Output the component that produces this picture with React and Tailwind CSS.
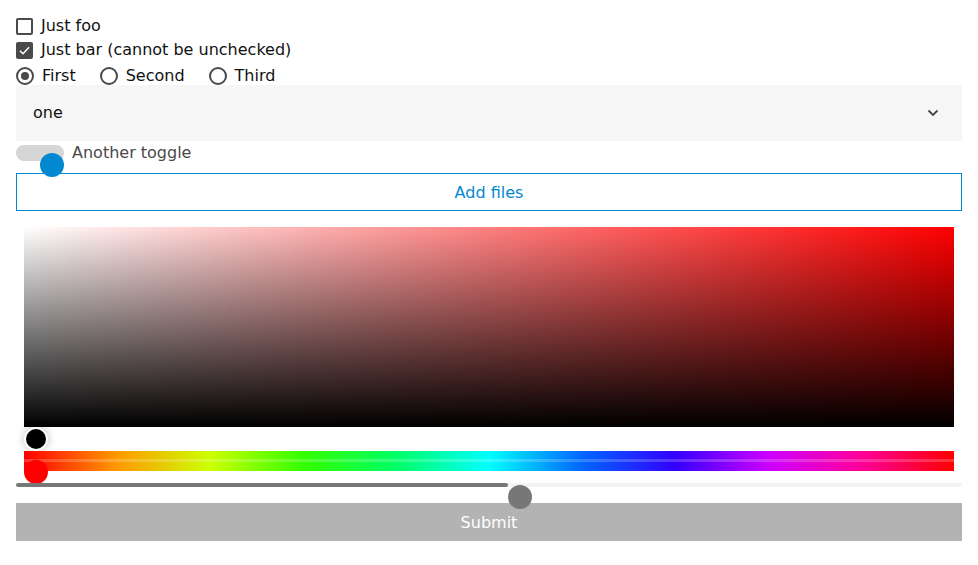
import { useState } from "react";

function Checkbox({ checked, label }) {
  return (
    <label className="flex items-center h-6 gap-2">
      <span className={"w-[17px] h-[17px] rounded-[2px] border-2 border-[#4a4a4a] flex items-center justify-center " + (checked ? "bg-[#4a4a4a]" : "bg-white")}>
        {checked && (
          <svg width="13" height="13" viewBox="0 0 12 12">
            <path d="M1.8 6.2 L4.6 9 L10.2 3" fill="none" stroke="white" strokeWidth="1.4" />
          </svg>
        )}
      </span>
      <span>{label}</span>
    </label>
  );
}

function Radio({ checked, label }) {
  return (
    <label className="flex items-center gap-2">
      <span className="w-[18px] h-[18px] rounded-full border-2 border-[#4a4a4a] flex items-center justify-center">
        {checked && <span className="w-2 h-2 rounded-full bg-[#4a4a4a]" />}
      </span>
      <span>{label}</span>
    </label>
  );
}

export default function App() {
  const [value] = useState(52)

  return (
    <div className="px-4 pt-[14px] text-[16px] text-[#111] font-['DejaVu_Sans',sans-serif]">
      <Checkbox label="Just foo" />
      <Checkbox checked label="Just bar (cannot be unchecked)" />
      <div className="flex items-center h-[23px] gap-6 pt-[4px]">
        <Radio checked label="First" />
        <Radio label="Second" />
        <Radio label="Third" />
      </div>

      <div className="h-14 bg-[#f6f6f6] flex items-center justify-between pl-[17px] pr-[23px]">
        <span>one</span>
        <svg width="12" height="8" viewBox="0 0 12 8">
          <path d="M1.5 1.5 L6 6 L10.5 1.5" fill="none" stroke="#444" strokeWidth="1.8" />
        </svg>
      </div>

      <div className="flex items-start h-8 pt-1 gap-2">
        <div className="relative w-12 h-4 rounded-full bg-[#d6d6d6]">
          <span className="absolute left-6 top-2 w-6 h-6 rounded-full bg-[#0288d1]" />
        </div>
        <span className="text-[#4a4a4a] leading-4">Another toggle</span>
      </div>

      <button className="w-full h-[38px] pt-[2px] border border-[#0288d1] text-[#0288d1]">Add files</button>

      <div className="px-2 mt-4">
        <div className="relative h-[200px] bg-[linear-gradient(to_right,#fff,#f00)]">
          <div className="absolute inset-0 bg-[linear-gradient(to_bottom,transparent,#000)]" />
          <span className="absolute left-0 top-full w-6 h-6 rounded-full bg-black border-2 border-white shadow-[0_0_8px_rgba(0,0,0,0.25)]" />
        </div>
        <div className="h-6" />
        <div className="relative h-5 bg-[linear-gradient(to_right,#f00,#f90,#cf0,#3f0,#0f6,#0ff,#06f,#30f,#c0f,#f09,#f00)]">
          <div className="absolute left-0 right-0 top-[8px] h-[3px] bg-white/20" />
          <span className="absolute left-0 top-[9px] w-6 h-6 rounded-full bg-[#f00]" />
        </div>
      </div>

      <div className="relative mt-3 h-1 rounded-full bg-[#f3f3f3]">
        <div className="h-1 rounded-full bg-[#777]" style={{ width: value + "%" }} />
        <span className="absolute top-0.5 w-6 h-6 rounded-full bg-[#777]" style={{ left: value + "%" }} />
      </div>

      <button className="w-full h-[38px] pt-[2px] mt-4 bg-[#b3b3b3] text-white">Submit</button>
    </div>
  );
}
